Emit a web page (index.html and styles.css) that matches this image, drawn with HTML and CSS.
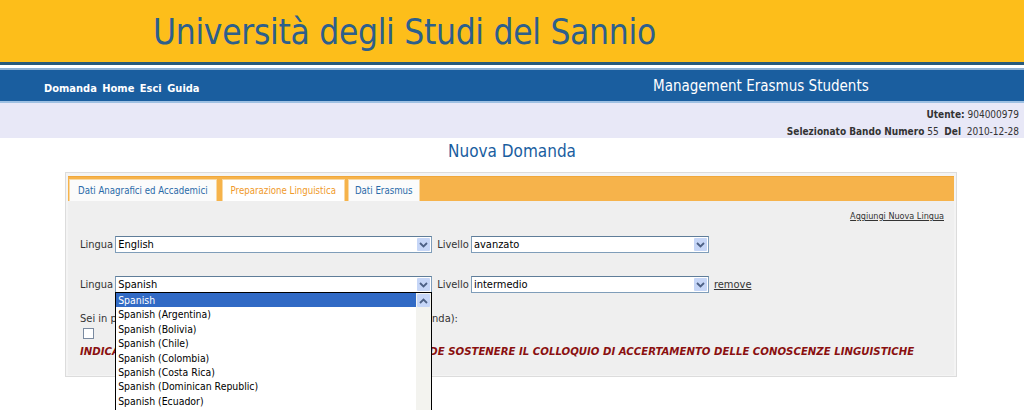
FILE: index.html
```html
<!DOCTYPE html>
<html>

<head>
    <title>Nuova Domanda</title>
    <meta charset="utf-8">
    <meta name="viewport" content="width=device-width, initial-scale=1">
    <link rel="stylesheet" href="styles.css">
</head>

<body>
<div id="header">
    <h1 class="site-title">Università degli Studi del Sannio</h1>
</div>
<div id="stripes"></div>

<div id="navbar">
    <div class="nav-links">
        <a href="#">Domanda</a>
        <a href="#">Home</a>
        <a href="#">Esci</a>
        <a href="#">Guida</a>
    </div>
    <div class="nav-title">Management Erasmus Students</div>
</div>

<div id="userbar">
    <div><b>Utente:</b> 904000979</div>
    <div><b>Selezionato Bando Numero</b> 55 &nbsp;<b>Del</b> &nbsp;2010-12-28</div>
</div>

<div class="page-title">Nuova Domanda</div>

<div id="panel">
    <div class="tabs">
        <div class="tab tab-1">Dati Anagrafici ed Accademici</div>
        <div class="tab tab-active">Preparazione Linguistica</div>
        <div class="tab tab-3">Dati Erasmus</div>
    </div>

    <div class="panel-body">
        <div class="add-row"><a href="#">Aggiungi Nuova Lingua</a></div>

        <div class="lang-row">
            <span class="label">Lingua</span>
            <div class="select select-lang">
                <span class="select-value">English</span>
                <span class="arrow"><svg width="9" height="6" viewBox="0 0 9 6"><path d="M1 1 L4.5 4.5 L8 1" fill="none" stroke="#4d6185" stroke-width="1.8"/></svg></span>
            </div>
            <span class="label label-2">Livello</span>
            <div class="select select-level">
                <span class="select-value">avanzato</span>
                <span class="arrow"><svg width="9" height="6" viewBox="0 0 9 6"><path d="M1 1 L4.5 4.5 L8 1" fill="none" stroke="#4d6185" stroke-width="1.8"/></svg></span>
            </div>
        </div>

        <div class="lang-row lang-row-2">
            <span class="label">Lingua</span>
            <div class="select select-lang">
                <span class="select-value">Spanish</span>
                <span class="arrow"><svg width="9" height="6" viewBox="0 0 9 6"><path d="M1 1 L4.5 4.5 L8 1" fill="none" stroke="#4d6185" stroke-width="1.8"/></svg></span>
                <!-- open list -->
                <div class="dropdown">
                    <div class="options">
                        <div class="option selected">Spanish</div>
                        <div class="option">Spanish (Argentina)</div>
                        <div class="option">Spanish (Bolivia)</div>
                        <div class="option">Spanish (Chile)</div>
                        <div class="option">Spanish (Colombia)</div>
                        <div class="option">Spanish (Costa Rica)</div>
                        <div class="option">Spanish (Dominican Republic)</div>
                        <div class="option">Spanish (Ecuador)</div>
                    </div>
                    <div class="scrollbar">
                        <span class="arrow arrow-up"><svg width="9" height="6" viewBox="0 0 9 6"><path d="M1 5 L4.5 1.5 L8 5" fill="none" stroke="#4d6185" stroke-width="1.8"/></svg></span>
                    </div>
                </div>
            </div>
            <span class="label label-2">Livello</span>
            <div class="select select-level">
                <span class="select-value">intermedio</span>
                <span class="arrow"><svg width="9" height="6" viewBox="0 0 9 6"><path d="M1 1 L4.5 4.5 L8 1" fill="none" stroke="#4d6185" stroke-width="1.8"/></svg></span>
            </div>
            <a class="remove" href="#">remove</a>
        </div>

        <div class="cert">Sei in possesso di una certificazione linguistica? (da allegare alla domanda):</div>
        <input class="checkbox" type="checkbox">
        <div class="notice">INDICARE QUI LA LINGUA STRANIERA, NELLA QUALE SI INTENDE SOSTENERE IL COLLOQUIO DI ACCERTAMENTO DELLE CONOSCENZE LINGUISTICHE</div>
    </div>
</div>
</body>

</html>
```

FILE: styles.css
```css
html, body {
    min-height: 410px;
}

body {
    margin: 0;
    background-color: white;
    font-family: "DejaVu Sans Condensed", "DejaVu Sans", sans-serif;
    font-size: 11px;
    color: #222;
}

a {
    color: inherit;
}

#header {
    height: 62px;
    background-color: #fdbe1a;
    border-bottom: 3px solid #28597a;
}

.site-title {
    margin: 0;
    padding: 2px 0 0 153px;
    font-size: 35px;
    font-weight: normal;
    letter-spacing: -0.3px;
    line-height: 60px;
    color: #2d5f8c;
}

#stripes {
    height: 3px;
    background-color: white;
    border-bottom: 2px solid #8fb0d2;
}

#navbar {
    height: 31px;
    background-color: #1a5e9f;
    border-bottom: 2px solid #9ec0e2;
    display: flex;
    align-items: center;
    color: white;
}

.nav-links {
    width: 609px;
    padding: 5px 0 0 44px;
    font-weight: bold;
}

.nav-links a {
    text-decoration: none;
    margin-right: 2px;
}

.nav-title {
    padding-top: 1px;
    font-size: 15px;
}

#userbar {
    height: 31px;
    padding: 4px 5px 0 0;
    background-color: #e8e8f7;
    text-align: right;
    font-size: 10px;
    line-height: 16.5px;
    color: #333;
}

.page-title {
    margin: 2px 0 10px;
    text-align: center;
    font-size: 17px;
    line-height: 22px;
    color: #1a5e9f;
}

#panel {
    margin-left: 65px;
    width: 886px;
    height: 198px;
    padding: 3px 2px 2px;
    border: 1px solid #dcdcdc;
    background-color: #f4f4f4;
}

.tabs {
    height: 22px;
    padding: 2px 0 0 1px;
    background-color: #f6b34b;
    border-top: 1px solid #f0a73a;
    display: flex;
    align-items: flex-end;
}

.tab {
    height: 21px;
    line-height: 21px;
    padding: 0 8px;
    font-size: 9.6px;
    color: #2a6aa8;
    background-color: #fbfbfb;
    border: 1px solid #f9d9a4;
    border-bottom: none;
}

.tab-1 {
    margin-right: 5px;
}

.tab-active {
    margin-right: 3px;
    color: #f09a2a;
    background-color: white;
}

.tab-3 {
    padding: 0 6px;
}

.panel-body {
    height: 174px;
    padding: 0 10px 0 12px;
    background-color: #efefef;
}

.add-row {
    padding: 10px 0 0;
    text-align: right;
    font-size: 9px;
    line-height: 10px;
    color: #333;
}

.lang-row {
    display: flex;
    align-items: center;
    margin-top: 15px;
    height: 17px;
    color: #333;
}

.lang-row-2 {
    margin-top: 23px;
}

.label {
    margin-right: 2px;
}

.label-2 {
    margin-left: 5px;
}

.select {
    position: relative;
    height: 15px;
    display: flex;
    align-items: center;
    background-color: white;
    border: 1px solid #7f9db9;
    border-top-color: #5f7d99;
}

.select-lang {
    width: 315px;
}

.select-level {
    width: 236px;
}

.select-value {
    flex: 1;
    padding-left: 2px;
    color: black;
}

.arrow {
    width: 13px;
    height: 13px;
    margin-right: 1px;
    display: flex;
    align-items: center;
    justify-content: center;
    background-color: #c6d6f7;
    border-radius: 1px;
}

.remove {
    margin-left: 5px;
}

.dropdown {
    position: absolute;
    top: 15px;
    left: -1px;
    width: 315px;
    height: 130px;
    display: flex;
    background-color: white;
    border: 1px solid black;
    z-index: 2;
}

.options {
    flex: 1;
}

.option {
    height: 14.4px;
    line-height: 14.4px;
    padding-left: 2px;
    font-size: 10.4px;
    color: black;
}

.selected {
    background-color: #316ac5;
    color: white;
}

.scrollbar {
    width: 15px;
    background-color: #f3f3ef;
}

.arrow-up {
    margin: 1px 0 0 1px;
}

.cert {
    margin-top: 19px;
    line-height: 14px;
    color: #333;
}

.checkbox {
    appearance: none;
    display: block;
    width: 11px;
    height: 11px;
    margin: 2px 0 0 3px;
    border: 1px solid #7a8aa0;
    background-color: white;
}

.notice {
    margin-top: 6px;
    font-size: 11.3px;
    font-weight: bold;
    font-style: italic;
    color: #8a1010;
}
```
